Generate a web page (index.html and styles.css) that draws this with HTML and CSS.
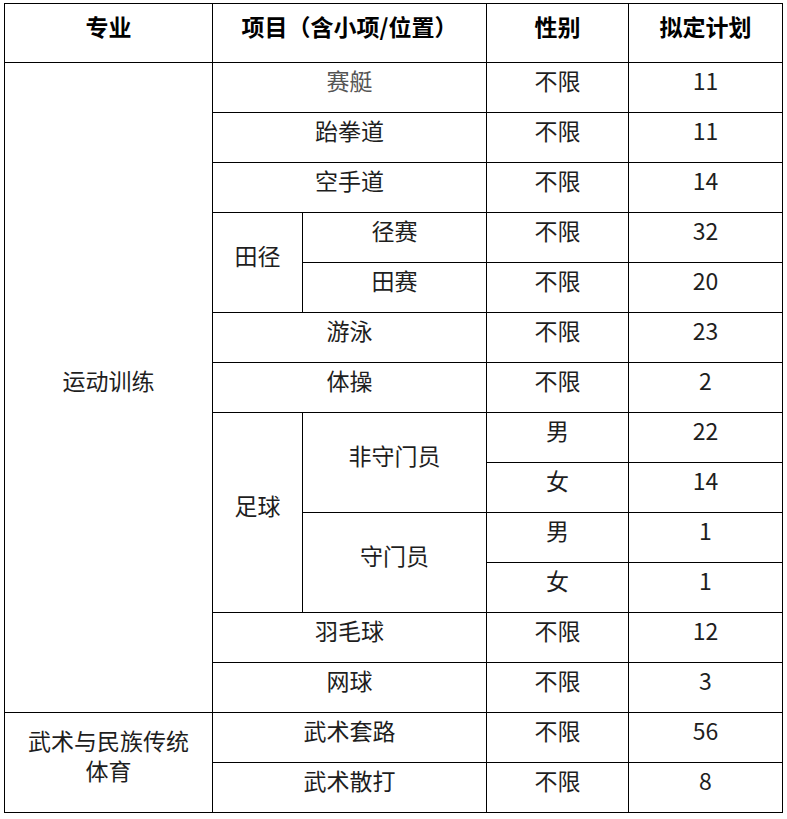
FILE: index.html
```html
<!DOCTYPE html>
<html lang="zh-CN">
<head>
<meta charset="utf-8">
<title>招生计划</title>
<link rel="stylesheet" href="styles.css">
</head>
<body>
<table class="plan">
  <colgroup>
    <col class="c1"><col class="c2"><col class="c3"><col class="c4"><col class="c5">
  </colgroup>
  <thead>
    <tr class="head">
      <th>专业</th>
      <th colspan="2">项目（含小项/位置）</th>
      <th>性别</th>
      <th>拟定计划</th>
    </tr>
  </thead>
  <tbody>
    <tr><td rowspan="13">运动训练</td><td colspan="2" class="muted">赛艇</td><td>不限</td><td>11</td></tr>
    <tr><td colspan="2">跆拳道</td><td>不限</td><td>11</td></tr>
    <tr><td colspan="2">空手道</td><td>不限</td><td>14</td></tr>
    <tr><td rowspan="2">田径</td><td>径赛</td><td>不限</td><td>32</td></tr>
    <tr><td>田赛</td><td>不限</td><td>20</td></tr>
    <tr><td colspan="2">游泳</td><td>不限</td><td>23</td></tr>
    <tr><td colspan="2">体操</td><td>不限</td><td>2</td></tr>
    <tr><td rowspan="4">足球</td><td rowspan="2">非守门员</td><td>男</td><td>22</td></tr>
    <tr><td>女</td><td>14</td></tr>
    <tr><td rowspan="2">守门员</td><td>男</td><td>1</td></tr>
    <tr><td>女</td><td>1</td></tr>
    <tr><td colspan="2">羽毛球</td><td>不限</td><td>12</td></tr>
    <tr><td colspan="2">网球</td><td>不限</td><td>3</td></tr>
    <tr><td rowspan="2" class="wide">武术与民族传统体育</td><td colspan="2">武术套路</td><td>不限</td><td>56</td></tr>
    <tr><td colspan="2">武术散打</td><td>不限</td><td>8</td></tr>
  </tbody>
</table>
</body>
</html>
```
FILE: styles.css
```css
html, body {
  background: #fff;
}
body {
  margin: 3px 0 0 4px;
  font-family: "Noto Sans CJK SC", "Noto Sans", sans-serif;
  color: #1e1e1e;
}
.plan {
  border-collapse: collapse;
  table-layout: fixed;
  width: 778px;
}
.c1 { width: 208px; }
.c2 { width: 90px; }
.c3 { width: 184px; }
.c4 { width: 142px; }
.c5 { width: 154px; }
.plan th,
.plan td {
  border: 1px solid #000;
  padding: 2px 6px 17px;
  font-size: 23px;
  line-height: 30px;
  text-align: center;
  vertical-align: middle;
}
.plan tbody tr {
  height: 50px;
}
.plan .head {
  height: 59px;
}
.plan th {
  font-weight: bold;
  color: #000;
}
.plan .muted {
  color: #555;
}
.plan .wide {
  padding-left: 14px;
  padding-right: 14px;
}
```
